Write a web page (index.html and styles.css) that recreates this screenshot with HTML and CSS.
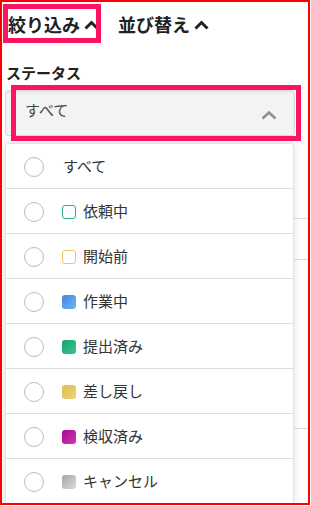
FILE: index.html
```html
<!doctype html>
<html>
<head>
  <title>絞り込み</title>
  <meta charset="utf-8">
  <link rel="stylesheet" href="styles.css">
</head>
<body>

	<div class="frame">

		<div class="tabs">
			<div class="tab tab-first">
				絞り込み
				<svg class="tab-arrow" width="15" height="10" viewBox="0 0 15 10"><polyline points="1.5,8.5 7.5,2.5 13.5,8.5" fill="none" stroke="#222" stroke-width="3"/></svg>
			</div>
			<div class="tab">
				並び替え
				<svg class="tab-arrow" width="15" height="10" viewBox="0 0 15 10"><polyline points="1.5,8.5 7.5,2.5 13.5,8.5" fill="none" stroke="#222" stroke-width="3"/></svg>
			</div>
		</div>

		<div class="label">ステータス</div>

		<div class="select">
			<span>すべて</span>
			<svg width="16" height="10" viewBox="0 0 16 10"><polyline points="1.5,8.5 8,2.5 14.5,8.5" fill="none" stroke="#8a9299" stroke-width="2.6"/></svg>
		</div>

		<div class="under">
			<div class="under-row under-a"></div>
			<div class="under-row under-b"></div>
			<div class="under-row under-c"></div>
		</div>

		<!-- dropdown menu -->
		<ul class="menu">
			<li><i class="radio"></i>すべて</li>
			<li><i class="radio"></i><b class="chip chip-request"></b>依頼中</li>
			<li><i class="radio"></i><b class="chip chip-before"></b>開始前</li>
			<li><i class="radio"></i><b class="chip chip-working"></b>作業中</li>
			<li><i class="radio"></i><b class="chip chip-submitted"></b>提出済み</li>
			<li><i class="radio"></i><b class="chip chip-returned"></b>差し戻し</li>
			<li><i class="radio"></i><b class="chip chip-accepted"></b>検収済み</li>
			<li><i class="radio"></i><b class="chip chip-cancel"></b>キャンセル</li>
		</ul>

		<!-- highlight marks -->
		<div class="mark mark-tab"></div>
		<div class="mark mark-select"></div>
	</div>

</body>
</html>
```

FILE: styles.css
```css
	html, body {height: 100%}
	body {
		margin: 0;
		padding: 0;
		background: #fff;
		font-family: "Noto Sans CJK JP", "Noto Sans", sans-serif;
		color: #222;
	}

	.frame {
		position: relative;
		width: 310px;
		height: 505px;
		box-sizing: border-box;
		border: 2px solid #ff0000;
		padding: 0 13px 0 3px;
		overflow: hidden;
	}

	.tabs {
		display: flex;
		align-items: center;
		height: 43px;
		padding-left: 3px;
	}
	.tab {
		display: flex;
		align-items: center;
		font-size: 18px;
		font-weight: bold;
		line-height: 1;
		margin-top: 1px;
	}
	.tab-first {
		margin-right: 19px;
	}
	.tab-arrow {
		margin-left: 4px;
		margin-top: 1px;
	}

	.label {
		margin-top: 19px;
		padding-left: 1px;
		font-size: 15px;
		font-weight: bold;
		line-height: 18px;
	}

	.select {
		display: flex;
		align-items: center;
		justify-content: space-between;
		height: 46px;
		margin-top: 8px;
		box-sizing: border-box;
		padding: 0 17px 0 19px;
		background: #f3f3f3;
		border: 1px solid #d9d9d9;
		border-radius: 3px;
		box-shadow: inset 0 2px 3px rgba(0,0,0,0.05);
		font-size: 15px;
		color: #444;
	}
	.select span {
		margin-top: -8px;
	}
	.select svg {
		margin-top: 4px;
	}

	.under {
		margin-right: -13px;
	}
	.under-row {
		border-bottom: 1px solid #d9dfe4;
	}
	.under-a {height: 82px;}
	.under-b {height: 40px;}
	.under-c {height: 168px;}

	.menu {
		position: absolute;
		left: 3px;
		top: 141px;
		width: 289px;
		box-sizing: border-box;
		margin: 0;
		padding: 0;
		list-style: none;
		background: #fff;
		border: 1px solid #e3e3e3;
		border-radius: 3px 3px 0 0;
		box-shadow: 0 0 10px rgba(0,0,0,0.13);
	}
	.menu li {
		display: flex;
		align-items: center;
		height: 45px;
		box-sizing: border-box;
		padding: 0 0 2px 18px;
		border-bottom: 1px solid #dcdcdc;
		font-size: 15px;
		color: #333;
	}
	.menu li:last-child {
		border-bottom: 0;
	}

	.radio {
		width: 20px;
		height: 20px;
		box-sizing: border-box;
		border: 1.5px solid #bcbcbc;
		border-radius: 50%;
		margin-right: 19px;
		margin-top: 3px;
	}

	.chip {
		width: 14px;
		height: 14px;
		box-sizing: border-box;
		border-radius: 3px;
		margin: 3px 7px 0 -1px;
	}
	.chip-request {border: 1.5px solid #26b07e; background: #fff;}
	.chip-before {border: 1.5px solid #ecc95e; background: #fff;}
	.chip-working {background: linear-gradient(135deg, #3f86e0, #72b6f2);}
	.chip-submitted {background: linear-gradient(135deg, #0fa56c, #3fc38e);}
	.chip-returned {background: linear-gradient(135deg, #e2be4c, #eed27a);}
	.chip-accepted {background: linear-gradient(135deg, #a8058f, #cc3ab5);}
	.chip-cancel {background: linear-gradient(135deg, #a6a6a6, #dcdcdc);}

	.mark {
		position: absolute;
		box-sizing: border-box;
		border: 5px solid #fc1363;
	}
	.mark-tab {
		left: 1px;
		top: 2px;
		width: 98px;
		height: 39px;
	}
	.mark-select {
		left: 9px;
		top: 83px;
		width: 290px;
		height: 56px;
	}
```
